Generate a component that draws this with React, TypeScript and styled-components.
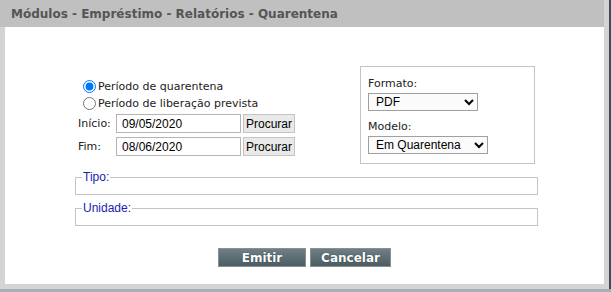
import React, { useState } from "react";
import styled, { createGlobalStyle } from "styled-components";

const GlobalStyle = createGlobalStyle`
   html, body {
      margin: 0;
      padding: 0;
      background-color: #a3b0b5;
      font-family: "DejaVu Sans", Verdana, sans-serif;
   }
`;

const Window = styled.div`
   width: 609px;
   height: 289px;
   box-sizing: border-box;
   display: flex;
   flex-direction: column;
   background-color: #ffffff;
   border: 5px solid #d4d4d4;
   border-top: 0;
   box-shadow: 2px 0 0 #35505c;
`;

const TitleBar = styled.div`
   height: 27px;
   flex-shrink: 0;
   margin: 0 -5px 0 -5px;
   padding-left: 11px;
   display: flex;
   align-items: center;
   background-color: #c0c0c0;
   color: #555555;
   font-size: 12px;
   font-weight: bold;
   border-right: 5px solid #d4d4d4;
`;

const Content = styled.div`
   flex: 1;
   padding: 39px 0 0 70px;
   display: flex;
   flex-direction: column;
`;

const Form = styled.div`
   width: 463px;
   display: flex;
   flex-direction: column;
`;

const TopRow = styled.div`
   width: 460px;
   display: flex;
   align-items: flex-start;
   justify-content: space-between;
`;

const LeftColumn = styled.div`
   margin-top: 12px;
   padding-left: 3px;
   display: flex;
   flex-direction: column;
   color: #222222;
   font-size: 11px;
`;

const RadioRow = styled.label`
   display: flex;
   align-items: center;
   height: 17px;
   margin-left: 5px;
   cursor: pointer;

   input {
      margin: 0 2px 0 0;
      width: 13px;
      height: 13px;
   }
`;

const DateRow = styled.div<{ $top: number }>`
   display: flex;
   align-items: center;
   margin-top: ${({ $top }) => $top}px;
`;

const FieldLabel = styled.span`
   width: 38px;
   font-size: 11px;
   color: #222222;
`;

const DateInput = styled.input`
   width: 125px;
   height: 19px;
   box-sizing: border-box;
   padding: 0 5px;
   border: 1px solid #b4b4b4;
   font-family: "Liberation Sans", Arial, sans-serif;
   font-size: 12px;
   color: #000000;
`;

const SmallButton = styled.button`
   margin-left: 2px;
   width: 52px;
   height: 19px;
   padding: 0;
   box-sizing: border-box;
   border: 1px solid #c4c4c4;
   background-color: #e9e9e9;
   font-family: "Liberation Sans", Arial, sans-serif;
   font-size: 12px;
   color: #000000;
`;

const OptionsBox = styled.div`
   width: 175px;
   height: 98px;
   box-sizing: border-box;
   border: 1px solid #c4c4c4;
   padding: 8px 0 0 7px;
   display: flex;
   flex-direction: column;
   align-items: flex-start;
   font-size: 11px;
   color: #222222;
`;

const BoxLabel = styled.div`
   height: 18px;
   line-height: 18px;
`;

const Select = styled.select<{ $width: number }>`
   width: ${({ $width }) => $width}px;
   height: 18px;
   margin-bottom: 7px;
   padding: 0 0 0 3px;
   border: 1px solid #a0a0a0;
   background-color: #fbfbfb;
   font-family: "Liberation Sans", Arial, sans-serif;
   font-size: 12px;
   color: #000000;
`;

const Group = styled.fieldset<{ $top: number }>`
   margin: ${({ $top }) => $top}px 0 0 0;
   padding: 0 6px 10px;
   border: 1px solid #c4c4c4;
   min-width: 0;
`;

const Legend = styled.legend`
   padding: 0 1px;
   font-family: "Liberation Sans", Arial, sans-serif;
   font-size: 12px;
   color: #1c1cb0;
`;

const ButtonBar = styled.div`
   margin-top: 22px;
   display: flex;
   justify-content: center;
   gap: 4px;
   padding-right: 70px;
`;

const ActionButton = styled.button<{ $width: number }>`
   width: ${({ $width }) => $width}px;
   height: 19px;
   padding: 0;
   box-sizing: border-box;
   border: 1px solid #8a8f92;
   background: linear-gradient(#6e7f86, #4c5c63);
   color: #ffffff;
   font-family: "DejaVu Sans", Verdana, sans-serif;
   font-size: 12px;
   font-weight: bold;
   text-shadow: 0 0 1px #1e2a30;
   cursor: pointer;
`;

export default function App() {
   const [period, setPeriod] = useState("quarentena");

   return (
      <>
         <GlobalStyle />
         <Window>
            <TitleBar>Módulos - Empréstimo - Relatórios - Quarentena</TitleBar>
            <Content>
               <Form>
                  <TopRow>
                     <LeftColumn>
                        <RadioRow>
                           <input
                              type="radio"
                              name="periodo"
                              checked={period === "quarentena"}
                              onChange={() => setPeriod("quarentena")}
                           />
                           Período de quarentena
                        </RadioRow>
                        <RadioRow>
                           <input
                              type="radio"
                              name="periodo"
                              checked={period === "liberacao"}
                              onChange={() => setPeriod("liberacao")}
                           />
                           Período de liberação prevista
                        </RadioRow>
                        <DateRow $top={2}>
                           <FieldLabel>Início:</FieldLabel>
                           <DateInput defaultValue="09/05/2020" />
                           <SmallButton>Procurar</SmallButton>
                        </DateRow>
                        <DateRow $top={4}>
                           <FieldLabel>Fim:</FieldLabel>
                           <DateInput defaultValue="08/06/2020" />
                           <SmallButton>Procurar</SmallButton>
                        </DateRow>
                     </LeftColumn>
                     <OptionsBox>
                        <BoxLabel>Formato:</BoxLabel>
                        <Select $width={110} defaultValue="PDF">
                           <option>PDF</option>
                           <option>XLS</option>
                        </Select>
                        <BoxLabel>Modelo:</BoxLabel>
                        <Select $width={120} defaultValue="Em Quarentena">
                           <option>Em Quarentena</option>
                        </Select>
                     </OptionsBox>
                  </TopRow>
                  <Group $top={6}>
                     <Legend>Tipo:</Legend>
                  </Group>
                  <Group $top={6}>
                     <Legend>Unidade:</Legend>
                  </Group>
               </Form>
               <ButtonBar>
                  <ActionButton $width={88}>Emitir</ActionButton>
                  <ActionButton $width={81}>Cancelar</ActionButton>
               </ButtonBar>
            </Content>
         </Window>
      </>
   );
}
